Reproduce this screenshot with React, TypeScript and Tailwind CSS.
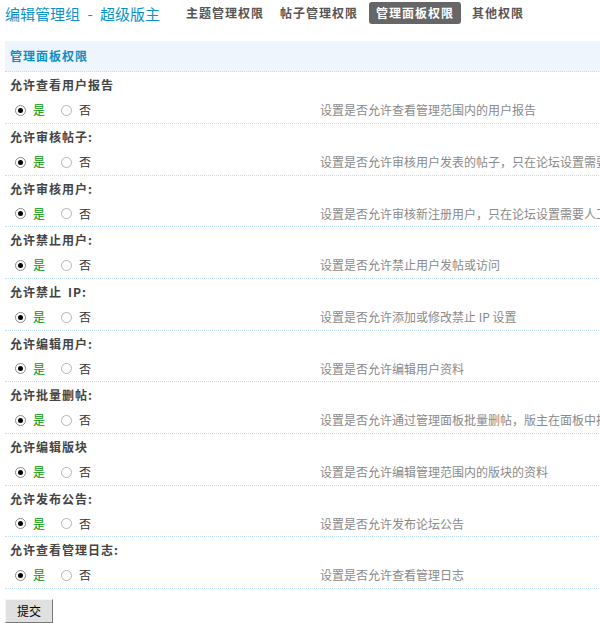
import React from "react";

type Perm = { label: React.ReactNode; desc: string };

const perms: Perm[] = [
  { label: "允许查看用户报告", desc: "设置是否允许查看管理范围内的用户报告" },
  { label: "允许审核帖子:", desc: "设置是否允许审核用户发表的帖子，只在论坛设置需要审核时有效" },
  { label: "允许审核用户:", desc: "设置是否允许审核新注册用户，只在论坛设置需要人工审核新用户时有效" },
  { label: "允许禁止用户:", desc: "设置是否允许禁止用户发帖或访问" },
  {
    label: (
      <>
        允许禁止 <span className="ml-[6px]">IP:</span>
      </>
    ),
    desc: "设置是否允许添加或修改禁止 IP 设置",
  },
  { label: "允许编辑用户:", desc: "设置是否允许编辑用户资料" },
  { label: "允许批量删帖:", desc: "设置是否允许通过管理面板批量删帖，版主在面板中批量删帖时有效" },
  { label: "允许编辑版块", desc: "设置是否允许编辑管理范围内的版块的资料" },
  { label: "允许发布公告:", desc: "设置是否允许发布论坛公告" },
  { label: "允许查看管理日志:", desc: "设置是否允许查看管理日志" },
];

const font = "font-['Noto_Sans_CJK_SC','Noto_Sans',sans-serif]";

function Radio({ checked }: { checked: boolean }) {
  return (
    <span
      className={`flex h-[11px] w-[11px] items-center justify-center rounded-full border ${
        checked ? "border-[#8a8a8a]" : "border-[#b5b5b5]"
      } bg-white`}
    >
      {checked && <span className="h-[5px] w-[5px] rounded-full bg-black" />}
    </span>
  );
}

function PermRow({ p, short }: { p: Perm; short: boolean }) {
  return (
    <div className="border-b border-dotted border-[#bde0f7]">
      <div className="flex h-[25px] items-center pl-[5px] text-[12px] font-bold tracking-[1px] text-[#444]">
        {p.label}
      </div>
      <div className={`flex ${short ? "h-[25px]" : "h-[26px]"} items-center text-[12px]`}>
        <div className="flex w-[315px] shrink-0 items-center pl-[10px]">
          <Radio checked />
          <span className="ml-[7px] text-[#009900]">是</span>
          <span className="ml-[16px]">
            <Radio checked={false} />
          </span>
          <span className="ml-[7px] text-[#333]">否</span>
        </div>
        <div className="whitespace-nowrap text-[#8a8a8a]">{p.desc}</div>
      </div>
    </div>
  );
}

export default function App() {
  return (
    <div className={`h-[623px] w-[600px] overflow-hidden bg-white ${font}`}>
      <div className="flex h-[26px] items-center pl-[5px]">
        <span className="text-[15px] leading-none text-[#0a93c9]">
          编辑管理组 <span className="mx-[4px]">-</span> 超级版主
        </span>
        <div className="ml-[26px] flex items-center text-[12px] font-bold tracking-[1px] text-[#555]">
          <span>主题管理权限</span>
          <span className="ml-[16px]">帖子管理权限</span>
          <span className="ml-[11px] rounded-[3px] bg-[#666] px-[7px] py-[2px] text-white">管理面板权限</span>
          <span className="ml-[11px]">其他权限</span>
        </div>
      </div>

      <div className="ml-[5px] mt-[15px] w-[700px]">
        <div className="flex h-[31px] items-center border-b border-dotted border-[#bde0f7] bg-[#eef5fc] pl-[5px] text-[12px] font-bold tracking-[1px] text-[#0a8fc7]">
          管理面板权限
        </div>
        {perms.map((p, i) => (
          <PermRow key={i} p={p} short={i % 3 === 2} />
        ))}
      </div>

      <div className="ml-[5px] mt-[8px]">
        <button className="h-[24px] w-[48px] border border-t-[#f5f5f5] border-l-[#f5f5f5] border-b-[#777] border-r-[#777] bg-[#e0e0e0] text-[12px] text-black">
          提交
        </button>
      </div>
    </div>
  );
}
